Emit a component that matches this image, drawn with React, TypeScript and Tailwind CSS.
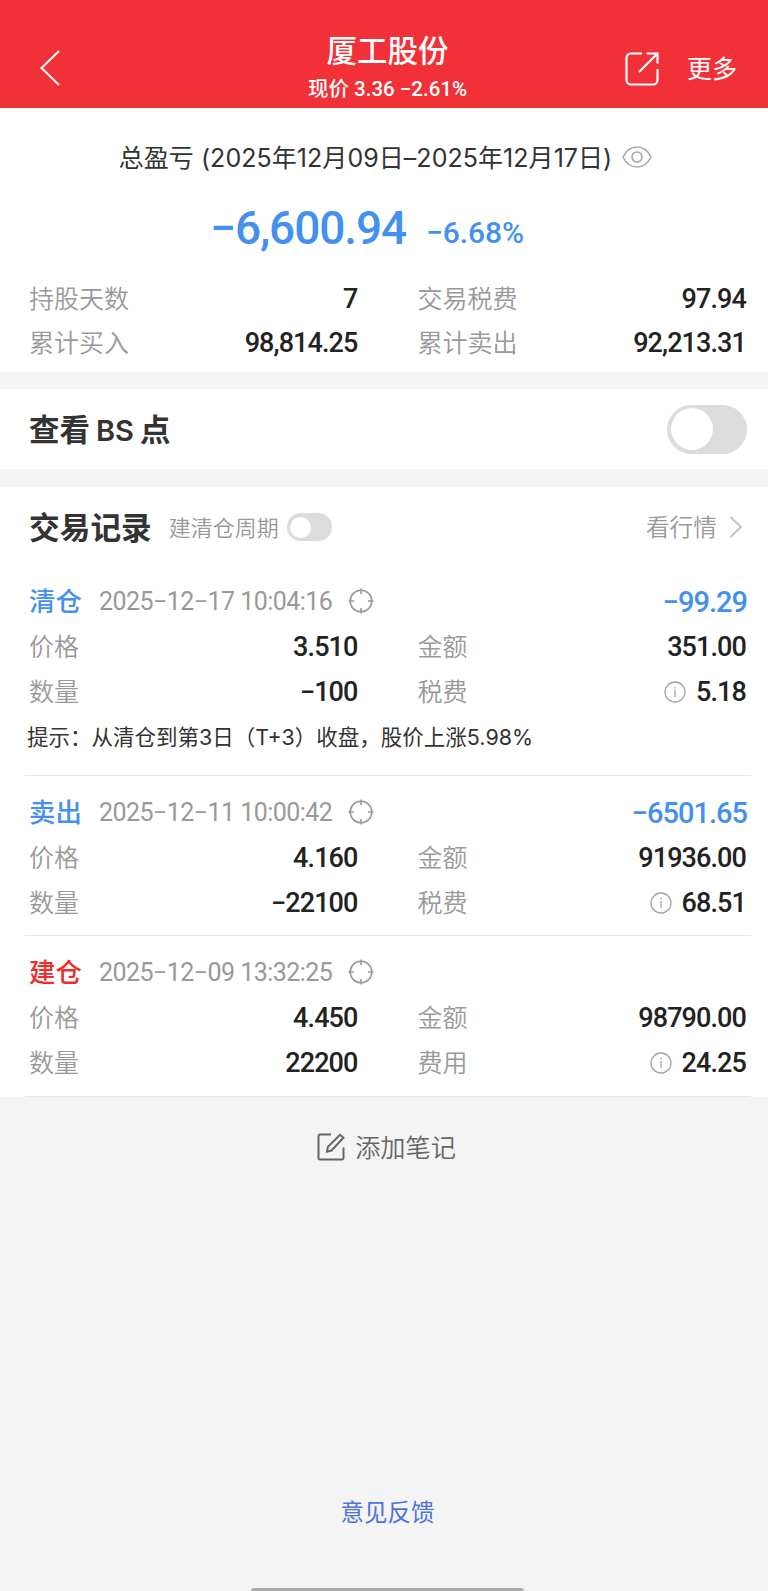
import { useState } from 'react';
import clsx from 'clsx';

type TradeRecord = {
  type: string;
  side: 'buy' | 'sell';
  time: string;
  profit?: string;
  price: string;
  amount: string;
  quantity: string;
  feeLabel: string;
  fee: string;
  tip?: string;
};

const records: TradeRecord[] = [
  {
    type: '清仓',
    side: 'sell',
    time: '2025−12−17 10:04:16',
    profit: '−99.29',
    price: '3.510',
    amount: '351.00',
    quantity: '−100',
    feeLabel: '税费',
    fee: '5.18',
    tip: '提示：从清仓到第3日（T+3）收盘，股价上涨5.98%',
  },
  {
    type: '卖出',
    side: 'sell',
    time: '2025−12−11 10:00:42',
    profit: '−6501.65',
    price: '4.160',
    amount: '91936.00',
    quantity: '−22100',
    feeLabel: '税费',
    fee: '68.51',
  },
  {
    type: '建仓',
    side: 'buy',
    time: '2025−12−09 13:32:25',
    price: '4.450',
    amount: '98790.00',
    quantity: '22200',
    feeLabel: '费用',
    fee: '24.25',
  },
];

function TargetIcon() {
  return (
    <svg className="h-[26px] w-[26px] text-[#9a9a9a]" viewBox="0 0 26 26" fill="none" stroke="currentColor" strokeWidth="1.6">
      <circle cx="13" cy="13" r="10.8" />
      <path d="M13 .5v5.500M13 20v5.500M.5 13H6M20 13h5.500" />
    </svg>
  );
}

function InfoIcon() {
  return (
    <svg className="h-[22px] w-[22px] text-[#a3a3a3]" viewBox="0 0 22 22" fill="none" stroke="currentColor" strokeWidth="1.3">
      <circle cx="11" cy="11" r="10" />
      <path d="M11 9v7M11 5.8v1.6" />
    </svg>
  );
}

type FieldProps = {
  label: string;
  value: string;
  info?: boolean;
};

function Field({ label, value, info }: FieldProps) {
  return (
    <div className="flex items-center justify-between">
      <span className="pb-0.5 font-['Noto_Sans_CJK_SC',sans-serif] text-[25px] font-[350] leading-none text-[#999]">{label}</span>
      <span className="flex items-center gap-2.5">
        {info && <InfoIcon />}
        <span className="mr-px pt-0.5 text-[27px] font-medium leading-none tracking-[-0.9px] text-[#222]">{value}</span>
      </span>
    </div>
  );
}

type ToggleProps = {
  checked: boolean;
  onChange: (checked: boolean) => void;
  small?: boolean;
};

function Toggle({ checked, onChange, small }: ToggleProps) {
  return (
    <button
      type="button"
      role="switch"
      aria-checked={checked}
      onClick={() => onChange(!checked)}
      className={clsx(
        'flex items-center rounded-full',
        small ? 'h-7 w-[45px] px-[3px]' : 'h-[49px] w-20 px-1',
        checked ? 'justify-end bg-[#f23038]' : 'bg-[#dcdcdc]'
      )}
    >
      <span className={clsx('rounded-full bg-white', small ? 'h-[21px] w-[21px]' : 'h-[42px] w-[42px]')} />
    </button>
  );
}

function RecordItem({ record }: { record: TradeRecord }) {
  return (
    <div className="ml-[25px] mr-[17px] border-b border-[#e8e8e8] pb-[10px] pl-1 pr-1 pt-[13px] last:pb-[11px]">
      <div className="flex h-[46px] items-center">
        <span
          className={clsx(
            "w-[70px] pb-0.5 font-['Noto_Sans_CJK_SC',sans-serif] text-[26.4px] font-medium leading-none",
            record.side === 'sell' ? 'text-[#4490ef]' : 'text-[#e9302f]'
          )}
        >
          {record.type}
        </span>
        <span className="w-[249px] whitespace-nowrap text-[25px] leading-none tracking-[-0.55px] text-[#999]">{record.time}</span>
        <TargetIcon />
        {record.profit && (
          <span className="ml-auto pt-0.5 text-[29px] font-medium leading-none tracking-[-1px] text-[#4490ef]">{record.profit}</span>
        )}
      </div>
      <div className="grid auto-rows-[45px] grid-cols-2 gap-x-[59px]">
        <Field label="价格" value={record.price} />
        <Field label="金额" value={record.amount} />
        <Field label="数量" value={record.quantity} />
        <Field label={record.feeLabel} value={record.fee} info />
      </div>
      {record.tip && (
        <p className="-ml-0.5 mb-[3px] flex h-12 items-center whitespace-nowrap font-[Inter,'Noto_Sans_CJK_SC',sans-serif] text-[21.5px] leading-none text-[#333]">
          {record.tip}
        </p>
      )}
    </div>
  );
}

export default function App() {
  const [showPoints, setShowPoints] = useState(false);
  const [showCycle, setShowCycle] = useState(false);

  return (
    <div className="flex h-[1591px] w-[768px] flex-col overflow-hidden bg-[#f4f4f4] font-[Roboto,'Noto_Sans_CJK_SC',sans-serif]">
      <header className="grid h-[108px] grid-cols-[1fr_auto_1fr] bg-[#f23038] text-white">
        <button type="button" className="ml-10 mt-[50px] h-9 w-5">
          <svg className="h-9 w-5" viewBox="0 0 20 36" fill="none" stroke="currentColor" strokeWidth="2">
            <path d="M19 1 1.5 18 19 35" />
          </svg>
        </button>
        <div className="flex flex-col items-center pl-[7px] pt-[37px]">
          <h1 className="text-[30.5px] font-medium leading-[30px]">厦工股份</h1>
          <p className="mt-2.5 whitespace-nowrap text-[20.5px] font-medium leading-6">现价 3.36 −2.61%</p>
        </div>
        <div className="flex items-start justify-end pr-[31px] pt-[52px]">
          <svg className="mr-7 h-[34px] w-[34px]" viewBox="0 0 34 34" fill="none" stroke="currentColor" strokeWidth="2.2">
            <path d="M17 1.5H6a4.500 4.500 0 0 0-4.500 4.500v22A4.500 4.500 0 0 0 6 32.500h22a4.500 4.500 0 0 0 4.500-4.500V17" />
            <path d="M21.500 1.500h11v10M32 2 14 20" />
          </svg>
          <span className="pt-px text-[25px] leading-[34px]">更多</span>
        </div>
      </header>

      <section className="h-[264px] bg-white pl-[29px] pr-[21px] pt-[22px]">
        <div className="flex h-[54px] items-center justify-center pr-[5px]">
          <span className="whitespace-nowrap pt-0.5 font-[Inter,'Noto_Sans_CJK_SC',sans-serif] text-[25px] leading-none tracking-[0.05px] text-[#333]">
            总盈亏 (2025年12月09日–2025年12月17日)
          </span>
          <svg className="ml-2.5 h-[22px] w-[30px] text-[#aaa]" viewBox="0 0 30 22" fill="none" stroke="currentColor" strokeWidth="1.7">
            <path d="M1 11C4 4.500 9 1 15 1s11 3.500 14 10c-3 6.500-8 10-14 10S4 17.500 1 11Z" />
            <circle cx="15" cy="11" r="5" />
          </svg>
        </div>
        <div className="flex h-[92px] items-baseline justify-center gap-5 pt-[17px] text-[#4490ef]">
          <span className="text-[46px] font-medium leading-[54px] tracking-[-1.1px]">−6,600.94</span>
          <span className="relative -top-px mr-[42px] text-[30px] font-medium tracking-[-0.1px]">−6.68%</span>
        </div>
        <div className="grid auto-rows-[44px] grid-cols-2 gap-x-[59px]">
          <Field label="持股天数" value="7" />
          <Field label="交易税费" value="97.94" />
          <Field label="累计买入" value="98,814.25" />
          <Field label="累计卖出" value="92,213.31" />
        </div>
      </section>

      <section className="mt-[17px] flex h-20 items-center justify-between bg-white pl-[29px] pr-[21px]">
        <h2 className="pt-0.5 font-[Inter,'Noto_Sans_CJK_SC',sans-serif] text-[30.5px] font-bold leading-none text-[#333]">
          查看<span className="mx-[6px] text-[29px] font-semibold">BS</span>点
        </h2>
        <Toggle checked={showPoints} onChange={setShowPoints} />
      </section>

      <section className="mt-[18px] bg-white">
        <div className="-mb-0.5 flex h-20 items-center pl-[29px] pr-[25px] font-['Noto_Sans_CJK_SC',sans-serif]">
          <h2 className="pb-0.5 text-[30.7px] font-bold leading-none text-[#333]">交易记录</h2>
          <span className="ml-[17px] mr-2 pb-0.5 text-[22px] font-[350] leading-none text-[#999]">建清仓周期</span>
          <Toggle small checked={showCycle} onChange={setShowCycle} />
          <span className="ml-auto pb-px text-[23.7px] font-[350] leading-none text-[#999]">看行情</span>
          <svg className="ml-3 h-[22px] w-3.5 text-[#c0c0c0]" viewBox="0 0 14 22" fill="none" stroke="currentColor" strokeWidth="1.8">
            <path d="m1.500 1 10.500 10-10.500 10" />
          </svg>
        </div>
        <div>
          {records.map((record) => (
            <RecordItem key={record.time} record={record} />
          ))}
        </div>
      </section>

      <button type="button" className="mt-[34px] flex h-8 items-center justify-center pl-[5px] text-[#666]">
        <svg className="mr-2.5 h-7 w-7" viewBox="0 0 28 28" fill="none" stroke="currentColor" strokeWidth="2">
          <path d="M14 1.500H3A1.500 1.500 0 0 0 1.500 3v22A1.500 1.500 0 0 0 3 26.500h22a1.500 1.500 0 0 0 1.500-1.500V14.500" />
          <path d="m23 1.800 3.400 3L14.500 17.500l-4.500 1.200.8-4.700Z" />
        </svg>
        <span className="font-['Noto_Sans_CJK_SC',sans-serif] text-[25.2px] font-[350] leading-none">添加笔记</span>
      </button>

      <footer className="mt-auto flex flex-col items-center pl-[7px]">
        <a href="#feedback" className="font-['Noto_Sans_CJK_SC',sans-serif] text-[23.5px] leading-[34px] text-[#4d71dc]">意见反馈</a>
        <div className="mt-[60px] h-[3px] w-[273px] rounded-t-sm bg-[#ababab]" />
      </footer>
    </div>
  );
}
